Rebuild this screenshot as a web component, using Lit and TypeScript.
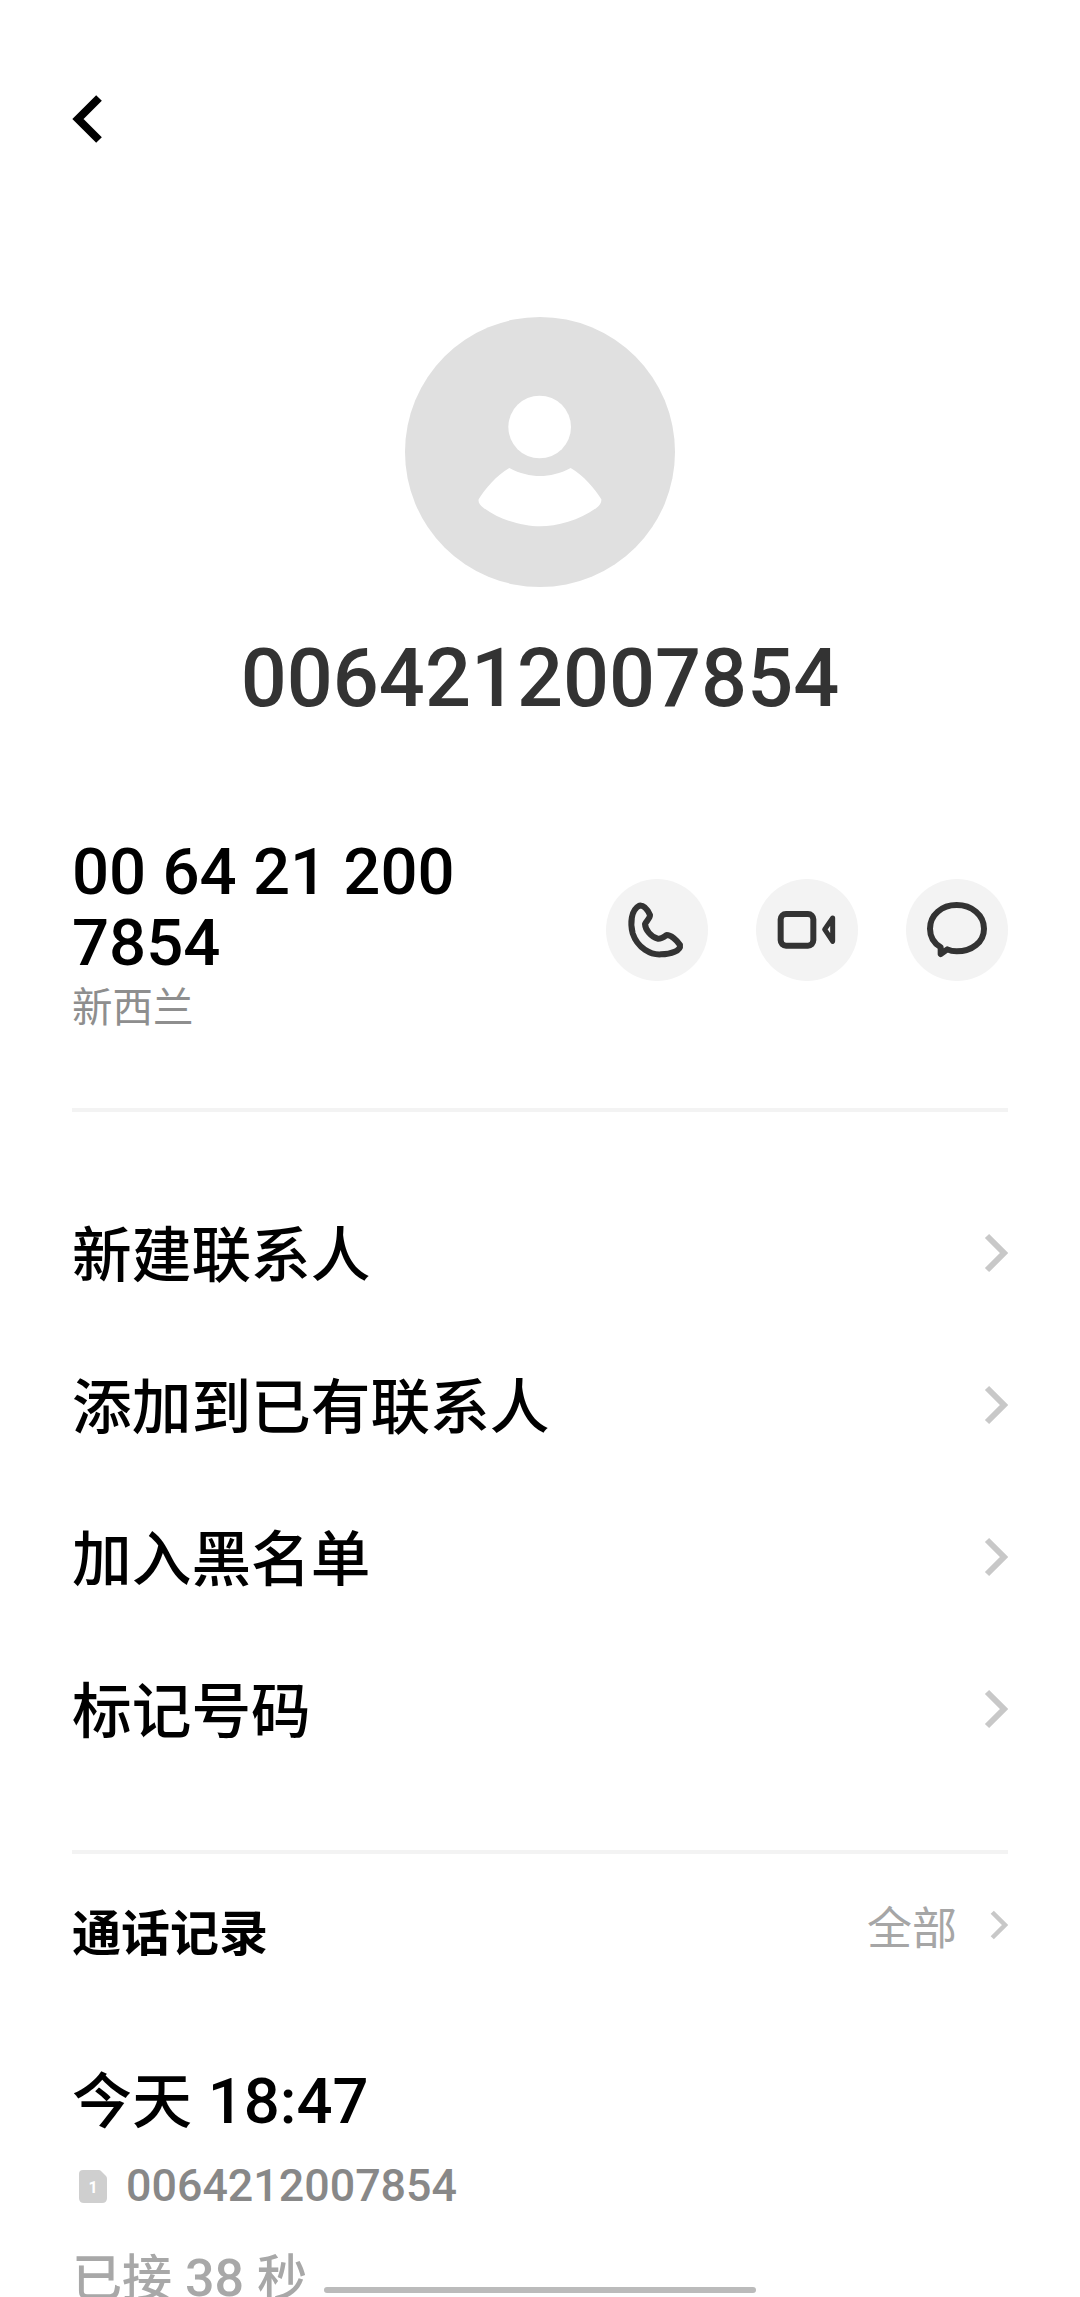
import { LitElement, html, css, svg } from 'lit';
import { customElement } from 'lit/decorators.js';

const rows = ['新建联系人', '添加到已有联系人', '加入黑名单', '标记号码'];

const chevron = svg`<path d="M3 3L20 20L3 37" fill="none" stroke="currentColor" stroke-width="6"/>`;

@customElement('app-root')
export class AppRoot extends LitElement {
  static styles = css`
    :host {
      display: block;
      position: relative;
      width: 1080px;
      height: 2297px;
      overflow: hidden;
      background: #fff;
      font-family: Roboto, "Noto Sans CJK SC", sans-serif;
      color: #000;
    }
    .page {
      padding: 0 72px;
    }
    .back {
      display: block;
      width: 32px;
      height: 48px;
      padding-top: 95px;
    }
    .avatar {
      display: block;
      width: 270px;
      height: 270px;
      margin: 174px auto 0;
    }
    .name {
      margin-top: 46px;
      text-align: center;
      font-size: 81px;
      line-height: 92px;
      font-weight: 500;
      color: #333;
    }
    .number-row {
      display: flex;
      justify-content: space-between;
      align-items: flex-start;
      margin-top: 111px;
      padding-bottom: 78px;
      border-bottom: 4px solid #f3f3f3;
    }
    .number {
      width: 400px;
      font-size: 65.3px;
      line-height: 71px;
      font-weight: 500;
    }
    .region {
      margin-top: 8px;
      font-size: 40.5px;
      line-height: 44px;
      color: #8e8e8e;
    }
    .actions {
      display: flex;
      gap: 48px;
      margin-top: 43px;
    }
    .action {
      width: 102px;
      height: 102px;
      border-radius: 50%;
      background: #f3f3f3;
    }
    .action svg {
      display: block;
      width: 102px;
      height: 102px;
      fill: none;
      stroke: #333;
      stroke-width: 18;
      stroke-linejoin: round;
    }
    .menu {
      margin-top: 65px;
      padding-bottom: 65px;
      border-bottom: 4px solid #f3f3f3;
    }
    .menu-row {
      display: flex;
      justify-content: space-between;
      align-items: center;
      height: 152px;
      font-size: 59.7px;
      font-weight: 500;
    }
    .menu-row span {
      margin-bottom: 4px;
    }
    .chev {
      display: block;
      width: 24px;
      height: 40px;
      color: #c8c8c8;
    }
    .log-head {
      display: flex;
      align-items: center;
      justify-content: space-between;
      margin-top: 44px;
      height: 64px;
    }
    .log-title {
      margin-bottom: 2px;
      font-size: 49px;
      font-weight: 700;
    }
    .log-all {
      display: flex;
      align-items: center;
      gap: 33px;
      margin-bottom: 10px;
      font-size: 45px;
      color: #a6a6a6;
    }
    .log-all .chev {
      width: 18px;
      height: 30px;
    }
    .day {
      margin-top: 104px;
      font-size: 63.4px;
      line-height: 70px;
      font-weight: 500;
    }
    .day .cjk {
      font-size: 60px;
    }
    .sim {
      display: flex;
      align-items: center;
      gap: 19px;
      margin-top: 22px;
      padding-left: 7px;
      font-size: 44.8px;
      line-height: 52px;
      font-weight: 500;
      color: #888;
    }
    .sim svg {
      display: block;
      width: 28px;
      height: 33px;
    }
    .sim text {
      font-size: 16px;
      font-weight: 700;
      fill: #fff;
    }
    .duration {
      margin-top: 46px;
      font-size: 52px;
      line-height: 42px;
      font-weight: 500;
      color: #a8a8a8;
    }
    .duration .cjk {
      font-size: 50px;
    }
    .home-bar {
      position: absolute;
      left: 324px;
      top: 2287px;
      width: 432px;
      height: 6px;
      border-radius: 3px;
      background: #bbb;
    }
  `;

  render() {
    return html`
      <div class="page">
        <svg class="back" viewBox="0 0 32 48">
          <path d="M27 3L6 24L27 45" fill="none" stroke="#000" stroke-width="8"/>
        </svg>

        <svg class="avatar" viewBox="75 50 810 810">
          <circle cx="480" cy="455" r="405" fill="#e0e0e0"/>
          <circle cx="479" cy="380" r="94" fill="#fff"/>
          <path fill="#fff" d="M388 503C420 520 450 527 480 527C510 527 540 520 572 503C610 525 645 565 664 597C665 605 660 615 650 622C600 660 530 678 480 678C430 678 360 660 310 622C300 615 294 605 296 597C315 565 350 525 388 503Z"/>
        </svg>

        <div class="name">0064212007854</div>

        <div class="number-row">
          <div>
            <div class="number">00 64 21 200 7854</div>
            <div class="region">新西兰</div>
          </div>
          <div class="actions">
            <div class="action">
              <svg viewBox="50 57 306 306">
                <path d="M150 137C125 150 122 190 130 220C145 265 185 285 215 283C245 283 275 272 272 255C262 240 245 225 232 225C222 232 212 238 205 236C185 230 168 210 167 192C172 182 182 175 182 165C175 150 165 135 150 137Z"/>
              </svg>
            </div>
            <div class="action">
              <svg viewBox="500 57 306 306">
                <rect x="574" y="162" width="98" height="95" rx="16"/>
                <path d="M730 174L706 208L730 244Z" stroke-width="15"/>
              </svg>
            </div>
            <div class="action">
              <svg viewBox="948 57 306 306">
                <path d="M1052 282L1052 262C1030 248 1020 228 1020 206C1020 165 1055 135 1100 135C1145 135 1182 165 1182 206C1182 247 1145 274 1100 274C1090 274 1080 272 1072 268Z"/>
              </svg>
            </div>
          </div>
        </div>

        <div class="menu">
          ${rows.map(
            (r) => html`
              <div class="menu-row">
                <span>${r}</span>
                <svg class="chev" viewBox="0 0 24 40">${chevron}</svg>
              </div>
            `
          )}
        </div>

        <div class="log-head">
          <span class="log-title">通话记录</span>
          <span class="log-all">
            全部
            <svg class="chev" viewBox="0 0 24 40">${chevron}</svg>
          </span>
        </div>

        <div class="day"><span class="cjk">今天</span> 18:47</div>
        <div class="sim">
          <svg viewBox="0 0 28 33">
            <path d="M4 0H20Q21 0 22 1L27 6Q28 7 28 9V28Q28 33 23 33H5Q0 33 0 28V4Q0 0 4 0Z" fill="#cfcfcf"/>
            <text x="14" y="23" text-anchor="middle">1</text>
          </svg>
          <span>0064212007854</span>
        </div>
        <div class="duration"><span class="cjk">已接</span> 38 <span class="cjk">秒</span></div>
      </div>
      <div class="home-bar"></div>
    `;
  }
}
